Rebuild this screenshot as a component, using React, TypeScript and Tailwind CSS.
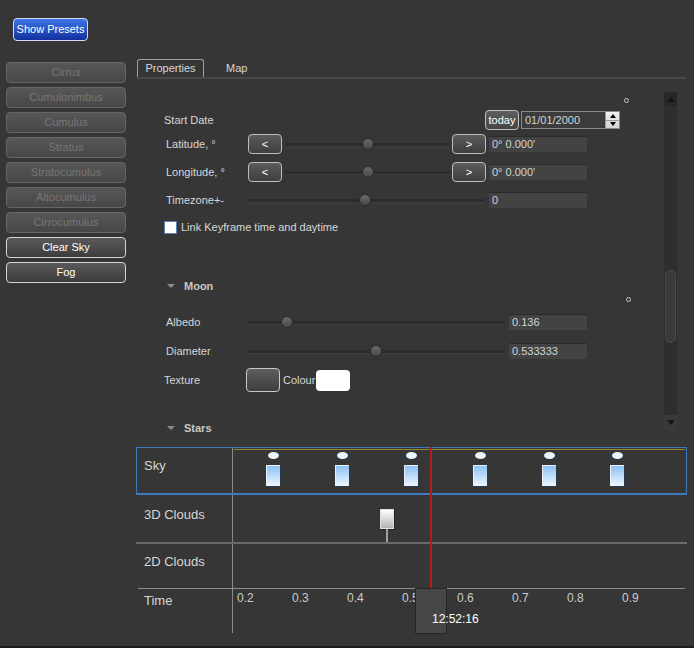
import React from 'react';

const PRESETS = [
  { name: 'Cirrus', enabled: false },
  { name: 'Cumulonimbus', enabled: false },
  { name: 'Cumulus', enabled: false },
  { name: 'Stratus', enabled: false },
  { name: 'Stratocumulus', enabled: false },
  { name: 'Altocumulus', enabled: false },
  { name: 'Cirrocumulus', enabled: false },
  { name: 'Clear Sky', enabled: true },
  { name: 'Fog', enabled: true },
];

const SKY_KEYS = [273, 342, 411, 480, 549, 617];
const TICKS = ['0.2', '0.3', '0.4', '0.5', '0.6', '0.7', '0.8', '0.9'];

function Slider({ width, pos }: { width: number; pos: number }) {
  return (
    <div className="relative flex h-[20px] items-center" style={{ width }}>
      <div className="h-[3px] w-full rounded-full bg-[#2c2c2c] shadow-[0_1px_0_#3f3f3f]" />
      <div
        className="absolute top-[4px] h-[12px] w-[12px] -translate-x-1/2 rounded-full border border-[#2a2a2a] bg-gradient-to-b from-[#6a6a6a] to-[#4a4a4a]"
        style={{ left: pos }}
      />
    </div>
  );
}

function ArrowButton({ label }: { label: string }) {
  return (
    <button className="flex h-[20px] w-[34px] items-center justify-center rounded-[4px] border border-[#bdbdbd] bg-gradient-to-b from-[#5c5c5c] to-[#3e3e3e] text-[11px] text-white">
      {label}
    </button>
  );
}

function Field({ value, width }: { value: string; width: number }) {
  return (
    <div
      className="flex h-[16px] items-center border-t border-[#2a2a2a] bg-[#434343] pl-[3px] text-[11px] text-[#cfd6d6]"
      style={{ width }}
    >
      {value}
    </div>
  );
}

function Degree({ left }: { left: number }) {
  return <span className="block h-[5px] w-[5px] rounded-full border border-[#c8c8c8]" style={{ marginLeft: left }} />;
}

export default function App() {
  return (
    <div className="relative h-[648px] w-[694px] overflow-hidden bg-[#363636] pt-[18px] text-[#d6d6d6] [font-family:'Liberation_Sans',Arial,sans-serif]">
      <button className="ml-[13px] flex h-[23px] w-[75px] items-center justify-center rounded-[4px] border border-[#d4dcf0] bg-gradient-to-b from-[#3f76e8] to-[#12309e] text-[11px] text-white">
        Show Presets
      </button>

      <div className="mt-[18px] flex">
        {/* presets */}
        <div className="ml-[6px] flex w-[120px] flex-col gap-[4px] pt-[3px]">
          {PRESETS.map((p) => (
            <button
              key={p.name}
              className={
                p.enabled
                  ? 'flex h-[21px] items-center justify-center rounded-[4px] border border-[#d6d6d6] bg-gradient-to-b from-[#5a5a5a] to-[#3c3c3c] text-[11px] text-white'
                  : 'flex h-[21px] items-center justify-center rounded-[4px] border border-[#666] bg-gradient-to-b from-[#575757] to-[#474747] text-[11px] text-[#777]'
              }
            >
              {p.name}
            </button>
          ))}
        </div>

        {/* right side */}
        <div className="ml-[10px] flex w-[551px] flex-col">
          <div className="flex h-[18px] shrink-0 items-end pl-[1px] text-[11px]">
            <div className="flex h-[18px] w-[67px] items-center justify-center rounded-t-[3px] border border-b-0 border-[#a0a0a0] text-[#d6d6d6]">
              Properties
            </div>
            <div className="ml-[22px] flex h-[18px] items-center text-[#d6d6d6]">Map</div>
          </div>
          <div className="ml-[1px] h-[2px] w-[549px] shrink-0 bg-[#484848]" />

          <div className="flex h-[353px] shrink-0">
            {/* properties */}
            <div className="h-[353px] w-[528px] overflow-hidden pl-[1px] text-[11px]">
              <div className="flex flex-col">
                <div className="flex h-[31px] items-start pt-[19px]">
                  <Degree left={487} />
                </div>

                <div className="flex h-[20px] items-center pl-[27px]">
                  <span className="w-[321px]">Start Date</span>
                  <button className="flex h-[20px] w-[34px] items-center justify-center rounded-[4px] border border-[#c0c0c0] bg-gradient-to-b from-[#5e5e5e] to-[#444] text-[11px] text-white">
                    today
                  </button>
                  <div className="ml-[2px] flex h-[18px] w-[99px] items-center border border-[#8a8a8a] bg-[#3c3c3c] pl-[3px] text-[#cfd6d6]">
                    <span className="flex-1">01/01/2000</span>
                    <div className="flex h-[16px] w-[14px] flex-col border-l border-[#9a9a9a] bg-gradient-to-b from-[#f2f2f2] to-[#d4d4d4]">
                      <div className="flex flex-1 items-center justify-center border-b border-[#9a9a9a]">
                        <span className="h-0 w-0 border-x-[3px] border-b-[4px] border-x-transparent border-b-black" />
                      </div>
                      <div className="flex flex-1 items-center justify-center">
                        <span className="h-0 w-0 border-x-[3px] border-t-[4px] border-x-transparent border-t-black" />
                      </div>
                    </div>
                  </div>
                </div>

                <div className="mt-[4px] flex h-[20px] items-center pl-[29px]">
                  <span className="w-[82px]">Latitude, °</span>
                  <ArrowButton label="<" />
                  <div className="ml-[3px]"><Slider width={165} pos={83} /></div>
                  <div className="ml-[2px]"><ArrowButton label=">" /></div>
                  <div className="ml-[3px]"><Field value="0° 0.000'" width={98} /></div>
                </div>

                <div className="mt-[8px] flex h-[20px] items-center pl-[29px]">
                  <span className="w-[82px]">Longitude, °</span>
                  <ArrowButton label="<" />
                  <div className="ml-[3px]"><Slider width={165} pos={83} /></div>
                  <div className="ml-[2px]"><ArrowButton label=">" /></div>
                  <div className="ml-[3px]"><Field value="0° 0.000'" width={98} /></div>
                </div>

                <div className="mt-[8px] flex h-[20px] items-center pl-[29px]">
                  <span className="w-[82px]">Timezone+-</span>
                  <Slider width={237} pos={117} />
                  <div className="ml-[4px]"><Field value="0" width={98} /></div>
                </div>

                <div className="mt-[10px] flex h-[14px] items-center pl-[27px]">
                  <span className="h-[13px] w-[13px] border border-[#5a7fb0] bg-white" />
                  <span className="ml-[4px]">Link Keyframe time and daytime</span>
                </div>

                <div className="mt-[44px] flex h-[16px] items-center pl-[30px] font-bold text-[#c8c8c8]">
                  <span className="h-0 w-0 border-x-[4px] border-t-[4px] border-x-transparent border-t-[#8a8a8a]" />
                  <span className="ml-[9px]">Moon</span>
                </div>

                <div className="mt-[3px] flex h-[5px]">
                  <Degree left={489} />
                </div>

                <div className="mt-[10px] flex h-[20px] items-center pl-[29px]">
                  <span className="w-[82px]">Albedo</span>
                  <Slider width={257} pos={39} />
                  <div className="ml-[4px]"><Field value="0.136" width={78} /></div>
                </div>

                <div className="mt-[9px] flex h-[20px] items-center pl-[29px]">
                  <span className="w-[82px]">Diameter</span>
                  <Slider width={257} pos={128} />
                  <div className="ml-[4px]"><Field value="0.533333" width={78} /></div>
                </div>

                <div className="mt-[7px] flex h-[24px] items-center pl-[27px]">
                  <span className="w-[82px]">Texture</span>
                  <button className="h-[24px] w-[34px] rounded-[4px] border border-[#c8c8c8] bg-gradient-to-b from-[#5e5e5e] to-[#3e3e3e]" />
                  <span className="ml-[3px]">Colour</span>
                  <span className="ml-[1px] h-[21px] w-[34px] rounded-[4px] bg-white" />
                </div>

                <div className="mt-[28px] flex h-[16px] items-center pl-[30px] font-bold text-[#c8c8c8]">
                  <span className="h-0 w-0 border-x-[4px] border-t-[4px] border-x-transparent border-t-[#8a8a8a]" />
                  <span className="ml-[9px]">Stars</span>
                </div>
              </div>
            </div>

            {/* scrollbar */}
            <div className="mt-[13px] flex h-[338px] w-[13px] flex-col bg-[#2e2e2e]">
              <div className="flex h-[14px] items-center justify-center bg-[#272727]">
                <span className="h-0 w-0 border-x-[4px] border-b-[5px] border-x-transparent border-b-[#151515]" />
              </div>
              <div className="flex flex-1 flex-col px-[1px] pt-[164px]">
                <div className="h-[73px] rounded-[5px] border border-[#4a4a4a] bg-[#3a3a3a]" />
              </div>
              <div className="flex h-[15px] items-center justify-center bg-[#3a3a3a]">
                <span className="h-0 w-0 border-x-[4px] border-t-[5px] border-x-transparent border-t-[#151515]" />
              </div>
            </div>
          </div>

          {/* timeline */}
          <div className="relative mt-[15px] flex h-[186px] shrink-0 flex-col text-[13px] leading-[15px] text-[#d6d6d6]">
            <div className="flex h-[48px] shrink-0 border border-b-2 border-[#3f78bd]">
              <div className="w-[95px] pl-[7px] pt-[10px]">Sky</div>
              <div className="relative flex-1 border-l border-[#8a8a8a]">
                <div className="absolute left-[1px] right-[1px] top-[1px] h-[1px] bg-[#9a8a28]" />
              </div>
            </div>
            <div className="flex h-[47px] shrink-0">
              <div className="w-[96px] pl-[8px] pt-[12px]">3D Clouds</div>
              <div className="flex-1 border-l border-[#8a8a8a]" />
            </div>
            <div className="h-[2px] shrink-0 bg-[#6a6a6a]" />
            <div className="flex h-[44px] shrink-0">
              <div className="w-[96px] pl-[8px] pt-[10px]">2D Clouds</div>
              <div className="flex-1 border-l border-[#8a8a8a]" />
            </div>
            <div className="mx-[2px] h-[1px] shrink-0 bg-[#8c8c8c]" />
            <div className="flex h-[44px] shrink-0">
              <div className="w-[96px] pl-[8px] pt-[4px]">Time</div>
              <div className="relative flex-1 border-l border-[#8a8a8a]">
                {TICKS.map((t, i) => (
                  <span key={t} className="absolute top-[2px] text-[12px] leading-[14px] text-[#c8cccc]" style={{ left: 4 + i * 55 }}>
                    {t}
                  </span>
                ))}
              </div>
            </div>

            {/* keyframes */}
            {SKY_KEYS.map((x) => (
              <React.Fragment key={x}>
                <div className="absolute top-[5px] h-[7px] w-[11px] rounded-[50%] bg-[#eaf6ff]" style={{ left: x - 136 - 5 }} />
                <div
                  className="absolute top-[18px] h-[21px] w-[14px] border-l border-t border-[#e8f2ff] bg-gradient-to-b from-[#8cc2f4] to-[#eef7ff] shadow-[1px_1px_0_#2a3a4a]"
                  style={{ left: x - 136 - 7 }}
                />
              </React.Fragment>
            ))}
            <div className="absolute left-[244px] top-[62px] h-[20px] w-[14px] border border-[#e0e0e0] bg-gradient-to-b from-[#ffffff] to-[#b4b4b4] shadow-[1px_1px_0_#222]" />
            <div className="absolute left-[250px] top-[82px] h-[13px] w-[2px] bg-[#a0a0a0]" />

            {/* playhead */}
            <div className="absolute left-[294px] top-0 h-[141px] w-[2px] bg-[#b01e1e]" />
            <div className="absolute left-[279px] top-[141px] h-[46px] w-[32px] border border-[#262626] bg-[#464646]" />
            <span className="absolute left-[296px] top-[165px] text-[12px] leading-[14px] text-white">12:52:16</span>
          </div>
        </div>
      </div>

      <div className="absolute bottom-0 left-0 h-[2px] w-full bg-[#1c1c1c]" />
    </div>
  );
}
